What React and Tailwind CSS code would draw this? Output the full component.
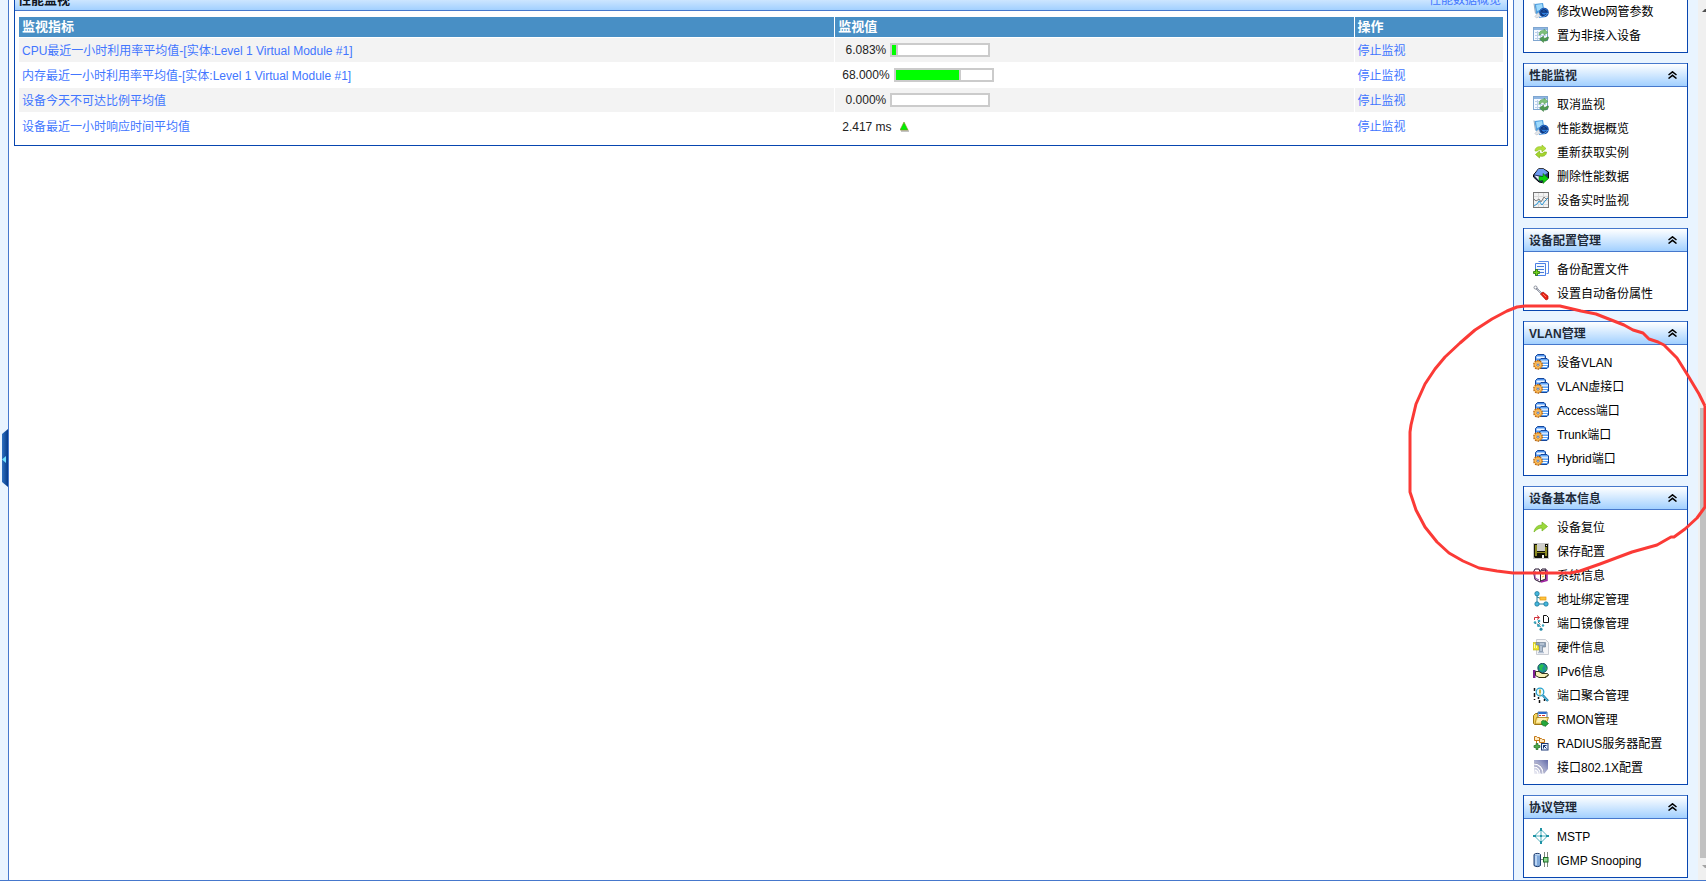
import React from 'react';

const icons = {
    webPage: (
        <>
            <path d="M1.500 1L10 0l1.500 8.500L3 11z" fill="#4f9fe0" />
            <path d="M3 2l6-1 1 5-6 2z" fill="#9fdafc" />
            <path d="M1 .5l1.500 10" stroke="#8fa8c0" />
            <path d="M2 13.500l3.500-4 2 3.500-4 2z" fill="#e3e7ec" stroke="#aab4c0" strokeWidth=".6" />
            <circle cx="11" cy="9.500" r="4.800" fill="#174fa8" />
            <circle cx="10.800" cy="9.200" r="3.600" fill="#2f7fe0" />
            <path d="M13.500 11a3 2.800 0 1 1 .3-2H9" stroke="#0f3478" strokeWidth="1.400" fill="none" />
            <path d="M6 14.500c3 .5 7-1.500 9-4.500" stroke="#5aa2e8" strokeWidth="1" fill="none" />
        </>
    ),
    sheetSync: (
        <>
            <rect x=".5" y=".5" width="14" height="13" fill="#f6faff" stroke="#7fa6d0" />
            <rect x="1" y="1" width="13" height="2" fill="#8fb6e2" />
            <path d="M2 5.500h11M2 8.500h11M2 11.500h8M4.500 4v9M7.500 4v9" stroke="#bcd0ea" />
            <path d="M6 8c0-4 3-5 5-4.500V2l4 3.500L11 8V6.500C9 6 8 6.500 7.500 8z" fill="#7cc07a" stroke="#4e9653" strokeWidth=".5" />
            <path d="M15.500 10c0 3.500-3 4.500-5 4v1.500L6.500 12l4-3v2c2 .5 3 0 3.500-1z" fill="#4d9a52" stroke="#35783c" strokeWidth=".5" />
        </>
    ),
    refresh: (
        <>
            <path d="M2 7c0-4 4-5 7-4V1l4 3.500L9 8V6C6 5 5 6 4.500 7z" fill="#b4de3a" stroke="#86b81c" strokeWidth=".6" />
            <path d="M13.500 8c0 4-4 5-7 4v2l-4-3.500L6.500 7v2c3 1 4 0 4.500-1z" fill="#a4d52e" stroke="#79ab18" strokeWidth=".6" />
        </>
    ),
    dataDelete: (
        <>
            <path d="M5.500.8h5L15.500 4v6L9 14.500 6 14 .5 9V7z" fill="#26396e" stroke="#000" />
            <path d="M5.500 1h5L15 4.500 10 8 1.500 6.500z" fill="#6f9cf0" />
            <path d="M1.500 7.500L8 9v3.500L5.500 12z" fill="#f3f6ff" />
            <path d="M6 8.500h4V5.500l5.500 5L10 15.500v-3H6z" fill="#10d010" stroke="#076b07" strokeWidth=".6" />
        </>
    ),
    lineChart: (
        <>
            <rect x=".5" y=".5" width="15" height="15" fill="#f3f3f3" stroke="#777" />
            <path d="M1 4.500h14M1 8.500h14M1 12.500h14M5.500 1v14M10.500 1v14" stroke="#dadada" />
            <path d="M1 7l2 2 3-2 2 3 3-5 2 2 2-1" stroke="#808080" fill="none" />
            <path d="M1 14l3-2 2-3 3 4 3-4 3-3" stroke="#2b97d6" fill="none" />
        </>
    ),
    fileAdd: (
        <>
            <path d="M5.500.5h10v12h-2" fill="#fff" stroke="#5b8be8" />
            <path d="M2.500 2.500h10v12h-10z" fill="#f4f9ff" stroke="#4b7fe6" />
            <path d="M4 5.500h7M4 8.500h7M7 11.500h4" stroke="#477ad8" />
            <path d="M2.500 8.500h2v2h2v2h-2v2h-2v-2h-2v-2h2z" fill="#72d418" stroke="#266d08" strokeWidth=".8" />
        </>
    ),
    screwdriver: (
        <>
            <circle cx="2.500" cy="2.500" r="1.500" fill="#fff" stroke="#8a8f9c" />
            <path d="M3.500 3.500l5 5" stroke="#737a8c" strokeWidth="2" strokeDasharray="1 .5" />
            <path d="M7.500 9l2.500-2 5 4v3l-2 1z" fill="#ea2114" stroke="#a8120a" strokeWidth=".7" />
            <path d="M10 9l3 3" stroke="#ff7a64" />
        </>
    ),
    vlan: (
        <>
            <path d="M2.500 2.500l2-2h6.500l1.500 1.500v9h-10z" fill="#4f94f0" stroke="#15479c" />
            <path d="M3.500 3.500h8" stroke="#f2f8ff" strokeWidth="2" />
            <path d="M3.500 6.500h5" stroke="#b6d6ff" />
            <path d="M6.500 6l1.500-1.500h6L15.500 6v7L14 14.500H6.500z" fill="#5ea4f6" stroke="#15479c" />
            <path d="M7.500 7.500h7.500" stroke="#d4e8ff" strokeWidth="2" />
            <path d="M9 10.500h6M9 12.500h5" stroke="#fff" />
            <circle cx="5" cy="10.800" r="4" fill="#ffc65c" stroke="#b0600e" strokeWidth="1.800" strokeDasharray="1.600 .9" />
            <circle cx="5" cy="10.800" r="3.400" fill="#ffce78" stroke="#f09a26" strokeWidth=".9" />
            <circle cx="5" cy="10.800" r="1.700" fill="#fff" stroke="#a86014" strokeWidth=".6" />
            <circle cx="5" cy="10.800" r=".9" fill="#2c62a8" />
        </>
    ),
    reset: (
        <path d="M1 13c1-5 4-7 8-7V3l5.500 4.500L9 12V9c-3 0-5 1-8 4z" fill="#9bd83c" stroke="#72b41c" strokeWidth=".7" />
    ),
    save: (
        <>
            <rect width="16" height="16" fill="#c8c8c8" />
            <path d="M1 1h14v14H2l-1-1z" fill="#141408" />
            <path d="M2 2h2v11H2zM12 4h2v9h-2zM4 9h8v1H4z" fill="#8c8a20" />
            <path d="M4 1h8v7H4z" fill="#cfcfca" />
            <path d="M9 12h2v3H9zM13 2h1v1h-1z" fill="#f4f4f4" />
        </>
    ),
    sysInfo: (
        <>
            <path d="M.5 5L2 2h4l1 3 2-3h4v11h-2l-4 2L2 12.500z" fill="#fff" stroke="#25102c" />
            <path d="M7.500 4l5-1v9l-5 2z" fill="#fffbe2" stroke="#3c2042" />
            <path d="M14 3v10.500L8 15" stroke="#a320a3" strokeWidth="1.500" fill="none" />
            <path d="M2 4v7l4 2" stroke="#953ba2" fill="none" />
            <path d="M9 7h2M9 10l2-1" stroke="#f2c11e" />
        </>
    ),
    binding: (
        <>
            <path d="M4 4v9h8M4 6l5 2" stroke="#227d9c" fill="none" />
            <circle cx="4" cy="2.700" r="2.200" fill="#45b6dc" stroke="#13708f" strokeWidth=".7" />
            <circle cx="4" cy="13" r="2.200" fill="#45b6dc" stroke="#13708f" strokeWidth=".7" />
            <circle cx="13" cy="13" r="2.200" fill="#45b6dc" stroke="#13708f" strokeWidth=".7" />
            <rect x="7" y="6" width="6" height="3" fill="#ffc43d" stroke="#e29410" strokeWidth=".7" />
        </>
    ),
    mirror: (
        <>
            <path d="M1.500 5V2.500H6M4 .5l2.500 2L4 4.500" stroke="#d0303a" fill="none" />
            <path d="M10.500.5h3l2 2v5h-5z" fill="#fff" stroke="#111" />
            <path d="M2 8l4 2 3 4M5 7l3 3" stroke="#222" strokeDasharray="1 1" fill="none" />
            <circle cx="2" cy="7.500" r="1.300" fill="#36a3bd" />
            <circle cx="6" cy="6" r="1.300" fill="#36a3bd" />
            <circle cx="5.500" cy="10.500" r="1.500" fill="#36a3bd" />
            <circle cx="10" cy="10.500" r="1.200" fill="#36a3bd" />
            <circle cx="8" cy="14.300" r="1.500" fill="#268ca8" />
        </>
    ),
    hardware: (
        <>
            <path d="M3.500.5h9l3 3v12h-12z" fill="#f4f4f6" stroke="#c9ccd3" />
            <path d="M0 3.500h6V11H0z" fill="#ece329" stroke="#b9af15" strokeWidth=".6" />
            <path d="M1.500 5v4M3.500 5v4" stroke="#fffbb0" />
            <path d="M3 3.500h9.500V8h-3v5h-3V8H6V6H3z" fill="#8fa2ba" stroke="#66788e" strokeWidth=".6" />
            <path d="M7 5h4M8 7v5" stroke="#d9e2ec" />
            <path d="M5 13.500h6" stroke="#b4c2d4" strokeWidth="1.500" />
        </>
    ),
    ipv6: (
        <>
            <circle cx="9.500" cy="5" r="4.700" fill="#1f8f97" stroke="#0a4046" strokeWidth=".8" />
            <path d="M6 3l3-2 2 2-2 2 1 3-3-1zM12 4l2 1-1 3z" fill="#28c04c" />
            <path d="M0 7h2.500v8H0z" fill="#7a1f92" />
            <path d="M2.500 8.500H6l3 2h5.500l1 1.500-4 2.500H6l-3.500-2z" fill="#f6f0b6" stroke="#20200c" strokeWidth=".9" />
            <path d="M6 14.500h7l2.500-2.500" stroke="#34340c" fill="none" />
        </>
    ),
    aggregate: (
        <>
            <path d="M1.500 1v3M1.500 6v4M5.500 10v2M6.500 13v3M1.500 12v1M11.500 12v2" stroke="#111" strokeWidth="1.500" />
            <circle cx="7" cy="5" r="3.800" fill="#e6faff" stroke="#2aa3cf" strokeWidth="1.300" />
            <path d="M7 2.500v4M7 7.500v1" stroke="#c1a01a" strokeWidth="1.600" />
            <path d="M10 8.500l5 5.500" stroke="#187ba6" strokeWidth="2.400" />
            <path d="M10.500 9l4 4.500" stroke="#69cfee" />
        </>
    ),
    rmon: (
        <>
            <path d="M.5 4.500l2-2h4l1 1h4v9l-2 1h-8l-1-1z" fill="#f5d258" stroke="#9a7410" />
            <path d="M5 1h9v7H5z" fill="#fff" stroke="#24508c" strokeWidth=".8" />
            <path d="M5.500 2h8" stroke="#2d6fcf" strokeWidth="2" />
            <path d="M6 4.500h2M9 4.500h3" stroke="#d03030" />
            <path d="M3.500 6.500h12L13 13H2z" fill="#ffe686" stroke="#a27c14" strokeWidth=".8" />
            <path d="M5 8h8M4 10h5" stroke="#fffad8" />
            <path d="M8.500 10.500c1-1.500 3-1.500 3.500 0v-1l3.500 3-3.500 3v-1c-2 1-4-1-3.500-4z" fill="#25a83b" stroke="#0f6b20" strokeWidth=".7" />
        </>
    ),
    radius: (
        <>
            <path d="M1.500 1.500h2l1 1h2v3h-5zM6.500 3.500h2l1 1h2v3h-5z" fill="#ffe9c0" stroke="#c37818" />
            <path d="M3.500 6v2" stroke="#c37818" />
            <path d="M3 8.500h2v2h2v2H5v2H3v-2H1v-2h2z" fill="#4fae4c" stroke="#246b26" strokeWidth=".7" />
            <rect x="8.500" y="8.500" width="6.500" height="6.500" fill="#eaf2ff" stroke="#1c3b78" />
            <path d="M10.500 10.500h3M10.500 10.500v3M10.500 10.500l3 3" stroke="#15336f" fill="none" />
        </>
    ),
    dot1x: (
        <>
            <defs>
                <linearGradient id="dot1xFill" x1="0" y1="1" x2="1" y2="0">
                    <stop offset="0" stopColor="#f3f3f8" />
                    <stop offset="1" stopColor="#626aa8" />
                </linearGradient>
            </defs>
            <path d="M1 1h14v9l-4 5H1z" fill="url(#dot1xFill)" />
            <path d="M1 5a9 9 0 0 1 9 10M1 8a6 6 0 0 1 6 7M2 11a4 4 0 0 1 3 4" stroke="#fff" strokeWidth="1.200" fill="none" />
            <path d="M1 4a10 10 0 0 1 10 10M1 7a7 7 0 0 1 7 7" stroke="#9999b4" strokeWidth=".7" fill="none" />
        </>
    ),
    mstp: (
        <>
            <path d="M8 1.500L14.500 8 8 14.500 1.500 8zM8 2v12M2 8h12" stroke="#3aa6b4" strokeWidth=".9" fill="none" />
            <path d="M7 0h2v3H7zM7 13h2v3H7zM0 7h3v2H0zM13 7h3v2h-3zM7 7h2v2H7z" fill="#1f93a5" />
        </>
    ),
    igmp: (
        <>
            <path d="M1 2.500c1.500-1.500 5-1.500 6.500 0v11c-1.500 1.500-5 1.500-6.500 0z" fill="#7fa8da" stroke="#1e3b6c" />
            <path d="M3 4v9" stroke="#cfe5fb" strokeWidth="1.500" />
            <path d="M2 2.800h5" stroke="#d6e9fb" />
            <path d="M8 7.500h3M11.500 0v15M14.500 0v15" stroke="#5d6b5d" strokeWidth=".8" />
            <rect x="10.500" y="5.500" width="4.500" height="4.500" fill="#8ad88a" stroke="#1d6b28" />
        </>
    ),
};

const Icon = ({ name }) => (
    <svg viewBox="0 0 16 16" className="w-4 h-4 shrink-0" fill="none" aria-hidden="true">
        {icons[name]}
    </svg>
);

const sections = [
    {
        items: [
            { icon: 'webPage', label: '修改Web网管参数' },
            { icon: 'sheetSync', label: '置为非接入设备' },
        ],
    },
    {
        title: '性能监视',
        items: [
            { icon: 'sheetSync', label: '取消监视' },
            { icon: 'webPage', label: '性能数据概览' },
            { icon: 'refresh', label: '重新获取实例' },
            { icon: 'dataDelete', label: '删除性能数据' },
            { icon: 'lineChart', label: '设备实时监视' },
        ],
    },
    {
        title: '设备配置管理',
        items: [
            { icon: 'fileAdd', label: '备份配置文件' },
            { icon: 'screwdriver', label: '设置自动备份属性' },
        ],
    },
    {
        title: 'VLAN管理',
        items: [
            { icon: 'vlan', label: '设备VLAN' },
            { icon: 'vlan', label: 'VLAN虚接口' },
            { icon: 'vlan', label: 'Access端口' },
            { icon: 'vlan', label: 'Trunk端口' },
            { icon: 'vlan', label: 'Hybrid端口' },
        ],
    },
    {
        title: '设备基本信息',
        items: [
            { icon: 'reset', label: '设备复位' },
            { icon: 'save', label: '保存配置' },
            { icon: 'sysInfo', label: '系统信息' },
            { icon: 'binding', label: '地址绑定管理' },
            { icon: 'mirror', label: '端口镜像管理' },
            { icon: 'hardware', label: '硬件信息' },
            { icon: 'ipv6', label: 'IPv6信息' },
            { icon: 'aggregate', label: '端口聚合管理' },
            { icon: 'rmon', label: 'RMON管理' },
            { icon: 'radius', label: 'RADIUS服务器配置' },
            { icon: 'dot1x', label: '接口802.1X配置' },
        ],
    },
    {
        title: '协议管理',
        items: [
            { icon: 'mstp', label: 'MSTP' },
            { icon: 'igmp', label: 'IGMP Snooping' },
        ],
    },
];

const metrics = [
    { name: 'CPU最近一小时利用率平均值-[实体:Level 1 Virtual Module #1]', value: '\u00a06.083%', percent: 6.083 },
    { name: '内存最近一小时利用率平均值-[实体:Level 1 Virtual Module #1]', value: '68.000%', percent: 68 },
    { name: '设备今天不可达比例平均值', value: '\u00a00.000%', percent: 0 },
    { name: '设备最近一小时响应时间平均值', value: '2.417 ms', trend: 'up' },
];

const UsageBar = ({ percent }) => (
    <div className="w-[100px] h-[14px] border-2 border-[#cbcbcb] bg-white">
        {percent > 0 && (
            <div className="h-full bg-[#00ff00] border-r-2 border-[#cbcbcb]" style={{ width: `${percent}%` }} />
        )}
    </div>
);

const TrendUp = () => (
    <svg viewBox="0 0 9 10" className="w-[9px] h-[10px] ml-1" aria-hidden="true">
        <path d="M1 8h8v2H1z" fill="#c4c4c4" />
        <path d="M4 0L8 8H0z" fill="#00f000" stroke="#8a8a20" strokeWidth=".6" />
    </svg>
);

const MenuSection = ({ title, items }) => (
    <section className={`border-x border-b border-[#0846b0] bg-white ${title ? '' : '-mt-px'}`}>
        {title && (
            <div className="flex items-center justify-between h-6 pl-[5px] pr-[10px] border-y border-[#4678cc] bg-linear-to-b from-white to-[#a2d0ff]">
                <h2 className="pt-[2px] font-bold text-[#1e2a38]">{title}</h2>
                <button type="button" aria-label={title}>
                    <svg viewBox="0 0 9 8" className="w-[9px] h-2" fill="none" stroke="#000" strokeWidth="1.500">
                        <path d="M.5 4L4.500.8 8.500 4M.5 7.500l4-3.200 4 3.200" />
                    </svg>
                </button>
            </div>
        )}
        <ul className={title ? 'py-[5px]' : 'pb-[5px]'}>
            {items.map((item) => (
                <li key={item.label}>
                    <a href="#" className="flex items-center gap-2 h-6 pl-[9px] text-black whitespace-nowrap">
                        <Icon name={item.icon} />
                        <span className="pt-px">{item.label}</span>
                    </a>
                </li>
            ))}
        </ul>
    </section>
);

const PerformancePanel = () => (
    <section className="-mt-3 border border-t-0 border-[#0846b0]">
        <div className="flex items-center justify-between h-[23px] pt-[2px] pl-[3px] pr-[6px] border-b border-[#4678cc] bg-linear-to-b from-white to-[#a2d0ff]">
            <h1 className="text-[13px] font-bold text-[#10161e]">性能监视</h1>
            <a href="#" className="text-[#4276ff]">性能数据概览</a>
        </div>
        <div className="px-1 pt-[6px] pb-1">
            <table className="w-full table-fixed border-separate border-spacing-0">
                <colgroup>
                    <col className="w-[55%]" />
                    <col className="w-[35%]" />
                    <col className="w-[10%]" />
                </colgroup>
                <thead>
                    <tr className="text-left text-[13px] text-white">
                        <th className="h-[21px] p-0 pl-[3px] border-b border-r border-white bg-[#488fc5]">监视指标</th>
                        <th className="p-0 pl-[3px] border-b border-r border-white bg-[#488fc5]">监视值</th>
                        <th className="p-0 pl-[3px] border-b border-white bg-[#488fc5]">操作</th>
                    </tr>
                </thead>
                <tbody>
                    {metrics.map((metric) => (
                        <tr key={metric.name} className="h-[25px] odd:bg-[#f3f3f3] last:h-7">
                            <td className="p-0 pt-px pl-[3px] border-b border-r border-white">
                                <a href="#" className="text-[#4276ff]">{metric.name}</a>
                            </td>
                            <td className="p-0 pl-[7px] border-b border-r border-white">
                                <div className="flex items-center gap-1 text-[#222]">
                                    <span>{metric.value}</span>
                                    {metric.trend ? <TrendUp /> : <UsageBar percent={metric.percent} />}
                                </div>
                            </td>
                            <td className="p-0 pt-px pl-[3px] border-b border-white">
                                <a href="#" className="text-[#4276ff]">停止监视</a>
                            </td>
                        </tr>
                    ))}
                </tbody>
            </table>
        </div>
    </section>
);

const ScrollTrack = () => (
    <div className="relative w-2 pl-[2px] bg-[#f0f0f0] flex flex-col shrink-0">
        <div className="grow-[408]" />
        <div className="grow-[450] bg-[#c1c1c1]" />
        <div className="grow-[22]" />
        <svg viewBox="0 0 4 3" className="absolute right-0 top-[9px] w-1 h-[3px]">
            <path d="M0 3l3-3h1v3z" fill="#505050" />
        </svg>
        <svg viewBox="0 0 4 3" className="absolute right-0 bottom-3 w-1 h-[3px]">
            <path d="M0 0h4v3H3z" fill="#a3a3a3" />
        </svg>
    </div>
);

export default function App() {
    return (
        <div
            className="relative overflow-hidden bg-white text-[12px] leading-4"
            style={{ fontFamily: '"Liberation Sans", "Noto Sans CJK SC", sans-serif' }}
        >
            <div className="flex border-b border-[#4678cc]">
                <div className="relative w-[9px] shrink-0 border-r border-[#4678cc] bg-[#e9f4ff]">
                    <button type="button" aria-label="收起" className="absolute right-0 top-[429px] w-[6px] h-[58px]">
                        <svg viewBox="0 0 6 58" className="block w-full h-full">
                            <defs>
                                <linearGradient id="handleFill">
                                    <stop offset="0" stopColor="#2e70c0" />
                                    <stop offset="1" stopColor="#053a88" />
                                </linearGradient>
                            </defs>
                            <path d="M0 5l6-5v58l-6-5z" fill="url(#handleFill)" />
                            <path d="M0 30.500l4-3.500v7z" fill="#6fe0ff" />
                        </svg>
                    </button>
                </div>

                <main className="flex-1 min-w-0 px-[5px]">
                    <PerformancePanel />
                </main>

                <aside className="w-[185px] shrink-0 border-l border-[#4678cc] bg-[#e9f4ff] pl-[9px] pr-[10px] pb-[2px] flex flex-col gap-[10px]">
                    {sections.map((section, i) => (
                        <MenuSection key={i} title={section.title} items={section.items} />
                    ))}
                </aside>

                <ScrollTrack />
            </div>

            {/* hand-drawn marker around the VLAN menu */}
            <svg
                viewBox="0 0 306 290"
                className="absolute right-0 top-[295px] w-[306px] h-[290px] pointer-events-none"
                fill="none"
                stroke="#fb3a36"
                strokeWidth="3"
                strokeLinejoin="round"
                aria-hidden="true"
            >
                <path d="M305 111L299 99 287 79 277 63 264 50 258 47 249 44 243 38 233 35 224 30 196 19 181 16 160 11H125L117 12 107 16 92 24 75 35 60 48 45 62 35 74 25 89 16 109 11 130 10 137V197L16 215 25 232 37 247 49 258 63 266 79 273 97 276 113 278H170L180 276 200 269 232 257 257 250 271 242H274L285 234 297 223 305 212V111" />
            </svg>
        </div>
    );
}
